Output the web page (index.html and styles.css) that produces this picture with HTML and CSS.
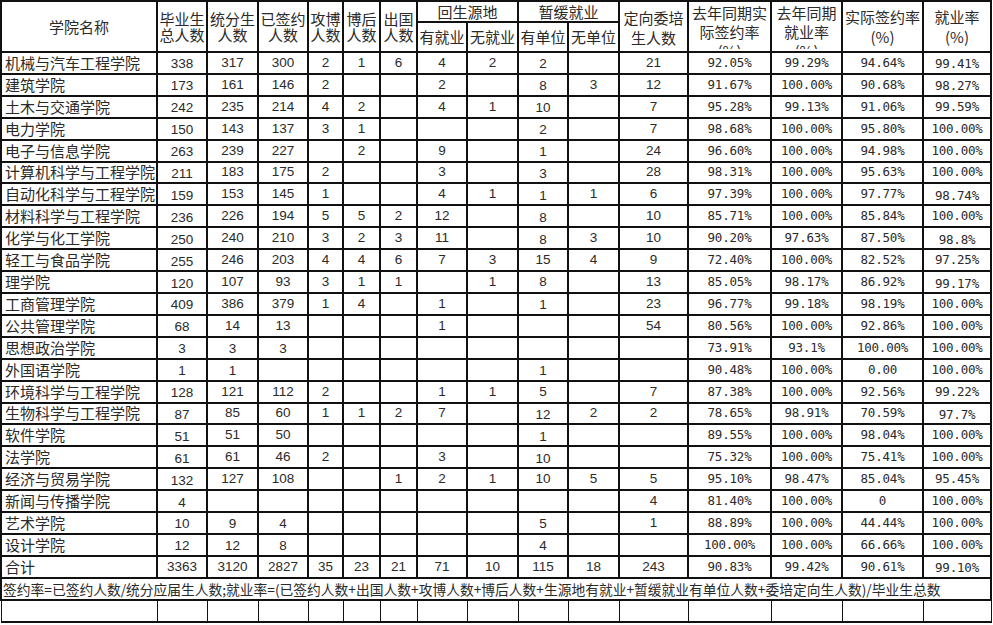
FILE: index.html
```html
<!DOCTYPE html>
<html lang="zh-CN">
<head>
<meta charset="utf-8">
<title>就业率统计表</title>
<link rel="stylesheet" href="styles.css">
</head>
<body>
<table class="sheet">
  <colgroup>
    <col class="c-name"><col class="c50"><col class="c51"><col class="c50"><col class="c35"><col class="c37"><col class="c37">
    <col class="c50"><col class="c51"><col class="c50"><col class="c51"><col class="c69"><col class="c83"><col class="c71"><col class="c81"><col class="c68">
  </colgroup>
  <tbody>
    <tr class="h1">
      <td rowspan="2" class="hd">学院名称</td>
      <td rowspan="2" class="hd">毕业生<br>总人数</td>
      <td rowspan="2" class="hd">统分生<br>人数</td>
      <td rowspan="2" class="hd">已签约<br>人数</td>
      <td rowspan="2" class="hd">攻博<br>人数</td>
      <td rowspan="2" class="hd">博后<br>人数</td>
      <td rowspan="2" class="hd">出国<br>人数</td>
      <td colspan="2" class="hd">回生源地</td>
      <td colspan="2" class="hd">暂缓就业</td>
      <td rowspan="2" class="hd low">定向委培<br>生人数</td>
      <td rowspan="2" class="hd top"><div class="clip">去年同期实<br>际签约率<br>(%)</div></td>
      <td rowspan="2" class="hd top"><div class="clip">去年同期<br>就业率<br>(%)</div></td>
      <td rowspan="2" class="hd two">实际签约率<br>(%)</td>
      <td rowspan="2" class="hd two">就业率<br>(%)</td>
    </tr>
    <tr class="h2">
      <td class="hd">有就业</td><td class="hd">无就业</td><td class="hd">有单位</td><td class="hd">无单位</td>
    </tr>
    <tr class="r"><td class="nm">机械与汽车工程学院</td><td class="n lo">338</td><td class="n">317</td><td class="n">300</td><td class="n">2</td><td class="n">1</td><td class="n">6</td><td class="n">4</td><td class="n">2</td><td class="n lo">2</td><td class="n"></td><td class="n">21</td><td class="p">92.05%</td><td class="p">99.29%</td><td class="p">94.64%</td><td class="p lo">99.41%</td></tr>
    <tr class="r"><td class="nm">建筑学院</td><td class="n lo">173</td><td class="n">161</td><td class="n">146</td><td class="n">2</td><td class="n"></td><td class="n"></td><td class="n">2</td><td class="n"></td><td class="n lo">8</td><td class="n">3</td><td class="n">12</td><td class="p">91.67%</td><td class="p">100.00%</td><td class="p">90.68%</td><td class="p lo">98.27%</td></tr>
    <tr class="r"><td class="nm">土木与交通学院</td><td class="n lo">242</td><td class="n">235</td><td class="n">214</td><td class="n">4</td><td class="n">2</td><td class="n"></td><td class="n">4</td><td class="n">1</td><td class="n lo">10</td><td class="n"></td><td class="n">7</td><td class="p">95.28%</td><td class="p">99.13%</td><td class="p">91.06%</td><td class="p">99.59%</td></tr>
    <tr class="r"><td class="nm">电力学院</td><td class="n lo">150</td><td class="n">143</td><td class="n">137</td><td class="n">3</td><td class="n">1</td><td class="n"></td><td class="n"></td><td class="n"></td><td class="n lo">2</td><td class="n"></td><td class="n">7</td><td class="p">98.68%</td><td class="p">100.00%</td><td class="p">95.80%</td><td class="p">100.00%</td></tr>
    <tr class="r"><td class="nm">电子与信息学院</td><td class="n lo">263</td><td class="n">239</td><td class="n">227</td><td class="n"></td><td class="n">2</td><td class="n"></td><td class="n">9</td><td class="n"></td><td class="n lo">1</td><td class="n"></td><td class="n">24</td><td class="p">96.60%</td><td class="p">100.00%</td><td class="p">94.98%</td><td class="p">100.00%</td></tr>
    <tr class="r"><td class="nm">计算机科学与工程学院</td><td class="n lo">211</td><td class="n">183</td><td class="n">175</td><td class="n">2</td><td class="n"></td><td class="n"></td><td class="n">3</td><td class="n"></td><td class="n lo">3</td><td class="n"></td><td class="n">28</td><td class="p">98.31%</td><td class="p">100.00%</td><td class="p">95.63%</td><td class="p">100.00%</td></tr>
    <tr class="r"><td class="nm">自动化科学与工程学院</td><td class="n lo">159</td><td class="n">153</td><td class="n">145</td><td class="n">1</td><td class="n"></td><td class="n"></td><td class="n">4</td><td class="n">1</td><td class="n lo">1</td><td class="n">1</td><td class="n">6</td><td class="p">97.39%</td><td class="p">100.00%</td><td class="p">97.77%</td><td class="p lo">98.74%</td></tr>
    <tr class="r"><td class="nm">材料科学与工程学院</td><td class="n lo">236</td><td class="n">226</td><td class="n">194</td><td class="n">5</td><td class="n">5</td><td class="n">2</td><td class="n">12</td><td class="n"></td><td class="n lo">8</td><td class="n"></td><td class="n">10</td><td class="p">85.71%</td><td class="p">100.00%</td><td class="p">85.84%</td><td class="p">100.00%</td></tr>
    <tr class="r"><td class="nm">化学与化工学院</td><td class="n lo">250</td><td class="n">240</td><td class="n">210</td><td class="n">3</td><td class="n">2</td><td class="n">3</td><td class="n">11</td><td class="n"></td><td class="n lo">8</td><td class="n">3</td><td class="n">10</td><td class="p">90.20%</td><td class="p">97.63%</td><td class="p">87.50%</td><td class="p lo">98.8%</td></tr>
    <tr class="r"><td class="nm">轻工与食品学院</td><td class="n lo">255</td><td class="n">246</td><td class="n">203</td><td class="n">4</td><td class="n">4</td><td class="n">6</td><td class="n">7</td><td class="n">3</td><td class="n">15</td><td class="n">4</td><td class="n">9</td><td class="p">72.40%</td><td class="p">100.00%</td><td class="p">82.52%</td><td class="p">97.25%</td></tr>
    <tr class="r"><td class="nm">理学院</td><td class="n lo">120</td><td class="n">107</td><td class="n">93</td><td class="n">3</td><td class="n">1</td><td class="n">1</td><td class="n"></td><td class="n">1</td><td class="n">8</td><td class="n"></td><td class="n">13</td><td class="p">85.05%</td><td class="p">98.17%</td><td class="p">86.92%</td><td class="p lo">99.17%</td></tr>
    <tr class="r"><td class="nm">工商管理学院</td><td class="n lo">409</td><td class="n">386</td><td class="n">379</td><td class="n">1</td><td class="n">4</td><td class="n"></td><td class="n">1</td><td class="n"></td><td class="n lo">1</td><td class="n"></td><td class="n">23</td><td class="p">96.77%</td><td class="p">99.18%</td><td class="p">98.19%</td><td class="p">100.00%</td></tr>
    <tr class="r"><td class="nm">公共管理学院</td><td class="n lo">68</td><td class="n">14</td><td class="n">13</td><td class="n"></td><td class="n"></td><td class="n"></td><td class="n">1</td><td class="n"></td><td class="n"></td><td class="n"></td><td class="n">54</td><td class="p">80.56%</td><td class="p">100.00%</td><td class="p">92.86%</td><td class="p">100.00%</td></tr>
    <tr class="r"><td class="nm">思想政治学院</td><td class="n lo">3</td><td class="n lo">3</td><td class="n lo">3</td><td class="n"></td><td class="n"></td><td class="n"></td><td class="n"></td><td class="n"></td><td class="n"></td><td class="n"></td><td class="n"></td><td class="p">73.91%</td><td class="p">93.1%</td><td class="p">100.00%</td><td class="p">100.00%</td></tr>
    <tr class="r"><td class="nm">外国语学院</td><td class="n lo">1</td><td class="n lo">1</td><td class="n"></td><td class="n"></td><td class="n"></td><td class="n"></td><td class="n"></td><td class="n"></td><td class="n lo">1</td><td class="n"></td><td class="n"></td><td class="p">90.48%</td><td class="p">100.00%</td><td class="p">0.00</td><td class="p">100.00%</td></tr>
    <tr class="r"><td class="nm">环境科学与工程学院</td><td class="n lo">128</td><td class="n">121</td><td class="n">112</td><td class="n">2</td><td class="n"></td><td class="n"></td><td class="n">1</td><td class="n">1</td><td class="n">5</td><td class="n"></td><td class="n">7</td><td class="p">87.38%</td><td class="p">100.00%</td><td class="p">92.56%</td><td class="p">99.22%</td></tr>
    <tr class="r"><td class="nm">生物科学与工程学院</td><td class="n lo">87</td><td class="n">85</td><td class="n">60</td><td class="n">1</td><td class="n">1</td><td class="n">2</td><td class="n">7</td><td class="n"></td><td class="n lo">12</td><td class="n">2</td><td class="n">2</td><td class="p">78.65%</td><td class="p">98.91%</td><td class="p">70.59%</td><td class="p lo">97.7%</td></tr>
    <tr class="r"><td class="nm">软件学院</td><td class="n lo">51</td><td class="n">51</td><td class="n">50</td><td class="n"></td><td class="n"></td><td class="n"></td><td class="n"></td><td class="n"></td><td class="n lo">1</td><td class="n"></td><td class="n"></td><td class="p">89.55%</td><td class="p">100.00%</td><td class="p">98.04%</td><td class="p">100.00%</td></tr>
    <tr class="r"><td class="nm">法学院</td><td class="n lo">61</td><td class="n">61</td><td class="n">46</td><td class="n">2</td><td class="n"></td><td class="n"></td><td class="n">3</td><td class="n"></td><td class="n lo">10</td><td class="n"></td><td class="n"></td><td class="p">75.32%</td><td class="p">100.00%</td><td class="p">75.41%</td><td class="p">100.00%</td></tr>
    <tr class="r"><td class="nm">经济与贸易学院</td><td class="n lo">132</td><td class="n">127</td><td class="n">108</td><td class="n"></td><td class="n"></td><td class="n">1</td><td class="n">2</td><td class="n">1</td><td class="n">10</td><td class="n">5</td><td class="n">5</td><td class="p">95.10%</td><td class="p">98.47%</td><td class="p">85.04%</td><td class="p">95.45%</td></tr>
    <tr class="r"><td class="nm">新闻与传播学院</td><td class="n lo">4</td><td class="n"></td><td class="n"></td><td class="n"></td><td class="n"></td><td class="n"></td><td class="n"></td><td class="n"></td><td class="n"></td><td class="n"></td><td class="n">4</td><td class="p">81.40%</td><td class="p">100.00%</td><td class="p">0</td><td class="p">100.00%</td></tr>
    <tr class="r"><td class="nm">艺术学院</td><td class="n lo">10</td><td class="n lo">9</td><td class="n lo">4</td><td class="n"></td><td class="n"></td><td class="n"></td><td class="n"></td><td class="n"></td><td class="n lo">5</td><td class="n"></td><td class="n">1</td><td class="p">88.89%</td><td class="p">100.00%</td><td class="p">44.44%</td><td class="p">100.00%</td></tr>
    <tr class="r"><td class="nm">设计学院</td><td class="n lo">12</td><td class="n lo">12</td><td class="n lo">8</td><td class="n"></td><td class="n"></td><td class="n"></td><td class="n"></td><td class="n"></td><td class="n lo">4</td><td class="n"></td><td class="n"></td><td class="p">100.00%</td><td class="p">100.00%</td><td class="p">66.66%</td><td class="p">100.00%</td></tr>
    <tr class="r"><td class="nm">合计</td><td class="n">3363</td><td class="n">3120</td><td class="n">2827</td><td class="n">35</td><td class="n">23</td><td class="n">21</td><td class="n">71</td><td class="n">10</td><td class="n">115</td><td class="n">18</td><td class="n">243</td><td class="p">90.83%</td><td class="p">99.42%</td><td class="p">90.61%</td><td class="p lo">99.10%</td></tr>
    <tr class="r note"><td colspan="16" class="nt">签约率=已签约人数/统分应届生人数;就业率=(已签约人数+出国人数+攻博人数+博后人数+生源地有就业+暂缓就业有单位人数+委培定向生人数)/毕业生总数</td></tr>
    <tr class="r blank"><td></td><td></td><td></td><td></td><td></td><td></td><td></td><td></td><td></td><td></td><td></td><td></td><td></td><td></td><td></td><td></td></tr>
  </tbody>
</table>
</body>
</html>
```
FILE: styles.css
```css
html, body {
  margin: 0;
  padding: 0;
  background: #ffffff;
}

.sheet {
  border-collapse: collapse;
  table-layout: fixed;
  width: 992px;
  font-family: "Noto Sans CJK SC", "Noto Sans", sans-serif;
  font-size: 15px;
  color: #2a2a2a;
}

.c-name { width: 156px; }
.c35 { width: 35px; }
.c37 { width: 37px; }
.c50 { width: 50px; }
.c51 { width: 51px; }
.c68 { width: 68px; }
.c69 { width: 69px; }
.c71 { width: 71px; }
.c81 { width: 81px; }
.c83 { width: 83px; }

.sheet td {
  border: 2px solid #111;
  padding: 0;
  text-align: center;
  vertical-align: middle;
  white-space: nowrap;
  overflow: hidden;
  line-height: 16px;
}

.h1 { height: 21px; }
.h2 { height: 30px; }

.hd {
  line-height: 22px;
  font-weight: 400;
}

.hd.two { line-height: 20px; }
.hd.low { padding-top: 3px; line-height: 20px; }

.hd.top { vertical-align: top; }

.clip {
  height: 47px;
  overflow: hidden;
  line-height: 19px;
  padding-top: 1px;
  box-sizing: border-box;
}

.r { height: 21.92px; }

.nm {
  text-align: left !important;
  padding-left: 3px !important;
}

.n {
  font-family: "Liberation Sans", Arial, sans-serif;
  font-size: 13.5px;
}

.p {
  font-family: "DejaVu Sans Mono", "Liberation Mono", monospace;
  font-size: 12.5px;
  letter-spacing: -0.2px;
}

.lo { padding-top: 3px !important; }

.nt {
  text-align: left !important;
  padding-left: 1px !important;
  font-size: 13.75px;
  letter-spacing: 0;
}

.blank td {
  border-left-width: 1px;
  border-right-width: 1px;
}
```
